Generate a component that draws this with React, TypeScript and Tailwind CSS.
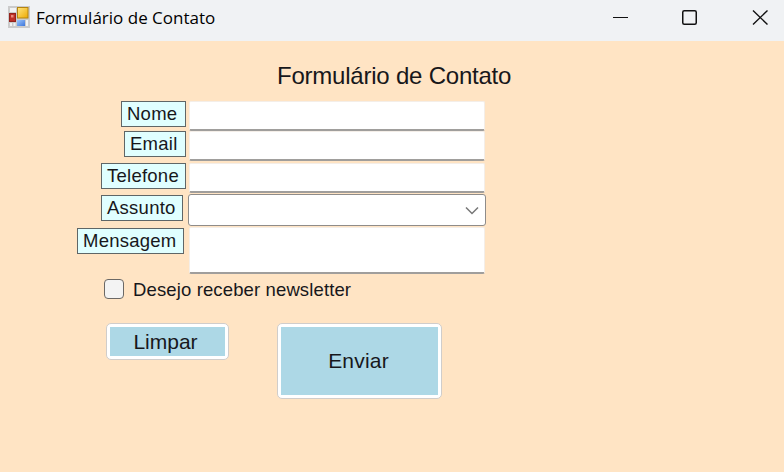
import type { ReactNode } from 'react';

function Label({ className, children }: { className: string; children: ReactNode }) {
  return (
    <div className="flex w-[189px] shrink-0">
      <span
        className={
          'flex h-[26px] items-center whitespace-nowrap border border-[#5f6667] bg-[#e0ffff] pl-[5px] pt-px leading-none tracking-[0.25px] ' +
          className
        }
      >
        {children}
      </span>
    </div>
  );
}

const field =
  'w-[296px] rounded-[2px] border border-[#f4eee8] border-b-2 border-b-[#a09e9c] bg-white outline-none';

function AppIcon() {
  return (
    <svg width="22" height="22" viewBox="0 0 22 22" className="shrink-0">
      <defs>
        <linearGradient id="yellow" x1="0" y1="0" x2="1" y2="1">
          <stop offset="0" stopColor="#ffe681" />
          <stop offset="1" stopColor="#eda900" />
        </linearGradient>
        <linearGradient id="blue" x1="0" y1="0" x2="1" y2="1">
          <stop offset="0" stopColor="#9cc6fb" />
          <stop offset="1" stopColor="#3d76db" />
        </linearGradient>
      </defs>
      <rect width="22" height="22" fill="#cbcbcb" />
      <path d="M2 2h6v4H2zM2 17h2v3H2zM5.500 17h2v3h-2zM18 14h2v6h-2z" fill="#f1f2f3" />
      <rect x="1.500" y="7.500" width="6" height="8" fill="#bd3027" stroke="#94231c" />
      <rect x="3" y="9" width="2.500" height="2.500" fill="#e98a7d" />
      <rect x="9.500" y="1.500" width="10.500" height="10.500" fill="url(#yellow)" stroke="#b58410" />
      <rect x="9" y="14" width="8" height="6" fill="url(#blue)" />
    </svg>
  );
}

export default function App() {
  return (
    <div className="flex h-[472px] w-[784px] flex-col overflow-hidden bg-[#ffe4c4] font-['Liberation_Sans',Arial,sans-serif] text-[#17171b]">
      <header className="flex h-[41px] shrink-0 items-start bg-[#f0f2f4] pl-2 pt-1.5">
        <AppIcon />
        <h1 className="ml-1.5 mt-px grow whitespace-nowrap font-['Open_Sans','Noto_Sans',sans-serif] text-[17px] leading-[22px] text-black">
          Formulário de Contato
        </h1>
        <svg width="171" height="22" viewBox="0 0 171 22" fill="none" stroke="#111" className="shrink-0">
          <path d="M0 11.500H15" />
          <rect x="69.750" y="4.750" width="13.500" height="13.500" rx="1.500" strokeWidth="1.500" />
          <path d="M140 4.500l14.500 14M154.500 4.500L140 18.500" strokeWidth="1.400" />
        </svg>
      </header>
      <main className="flex flex-col items-start">
        <h2 className="ml-[277px] mt-[21px] h-[39px] whitespace-nowrap text-[24px] leading-[28px] tracking-[-0.22px]">
          Formulário de Contato
        </h2>
        <form className="flex flex-col text-[18.5px]">
          <div className="flex h-[30px]">
            <Label className="ml-[121px] w-[65px]">Nome</Label>
            <input className={'h-[30px] ' + field} />
          </div>
          <div className="flex h-8">
            <Label className="ml-[124px] w-[62px]">Email</Label>
            <input className={'h-[30px] ' + field} />
          </div>
          <div className="flex h-8">
            <Label className="ml-[101px] w-[85px]">Telefone</Label>
            <input className={'h-[30px] ' + field} />
          </div>
          <div className="flex h-[33px]">
            <Label className="ml-[101px] w-[82px]">Assunto</Label>
            <div className="-ml-px -mt-px flex h-8 w-[298px] items-center justify-end rounded-[3px] border border-[#8f8c8a] bg-white pr-[6px]">
              <svg width="14" height="9" viewBox="0 0 14 9" fill="none" stroke="#777" strokeWidth="1.500">
                <path d="M1 1.500l6 6 6-6" />
              </svg>
            </div>
          </div>
          <div className="flex h-[51px]">
            <Label className="ml-[77px] w-[107px]">Mensagem</Label>
            <textarea className={'-mt-px h-[47px] resize-none ' + field} />
          </div>
          <label className="ml-[104px] flex h-[22px] items-start">
            <input
              type="checkbox"
              className="size-5 appearance-none rounded-[4px] border border-[#6b6865] bg-[#f3f3f3]"
            />
            <span className="ml-[9px] whitespace-nowrap leading-[22px] tracking-[0.13px]">
              Desejo receber newsletter
            </span>
          </label>
          <div className="ml-[106px] mt-[22px] flex items-start gap-12 text-[21px] leading-none">
            <button
              type="button"
              className="flex h-[37px] w-[123px] rounded-[5px] border border-[#d0cdcb] bg-white p-[3px]"
            >
              <span className="flex size-full items-center justify-center bg-[#add8e6] pb-px pr-1">Limpar</span>
            </button>
            <button
              type="button"
              className="flex h-[76px] w-[165px] rounded-[5px] border border-[#d0cdcb] bg-white p-[3px]"
            >
              <span className="flex size-full items-center justify-center bg-[#add8e6] pb-0.5 pr-0.5 tracking-[0.2px]">
                Enviar
              </span>
            </button>
          </div>
        </form>
      </main>
    </div>
  );
}
